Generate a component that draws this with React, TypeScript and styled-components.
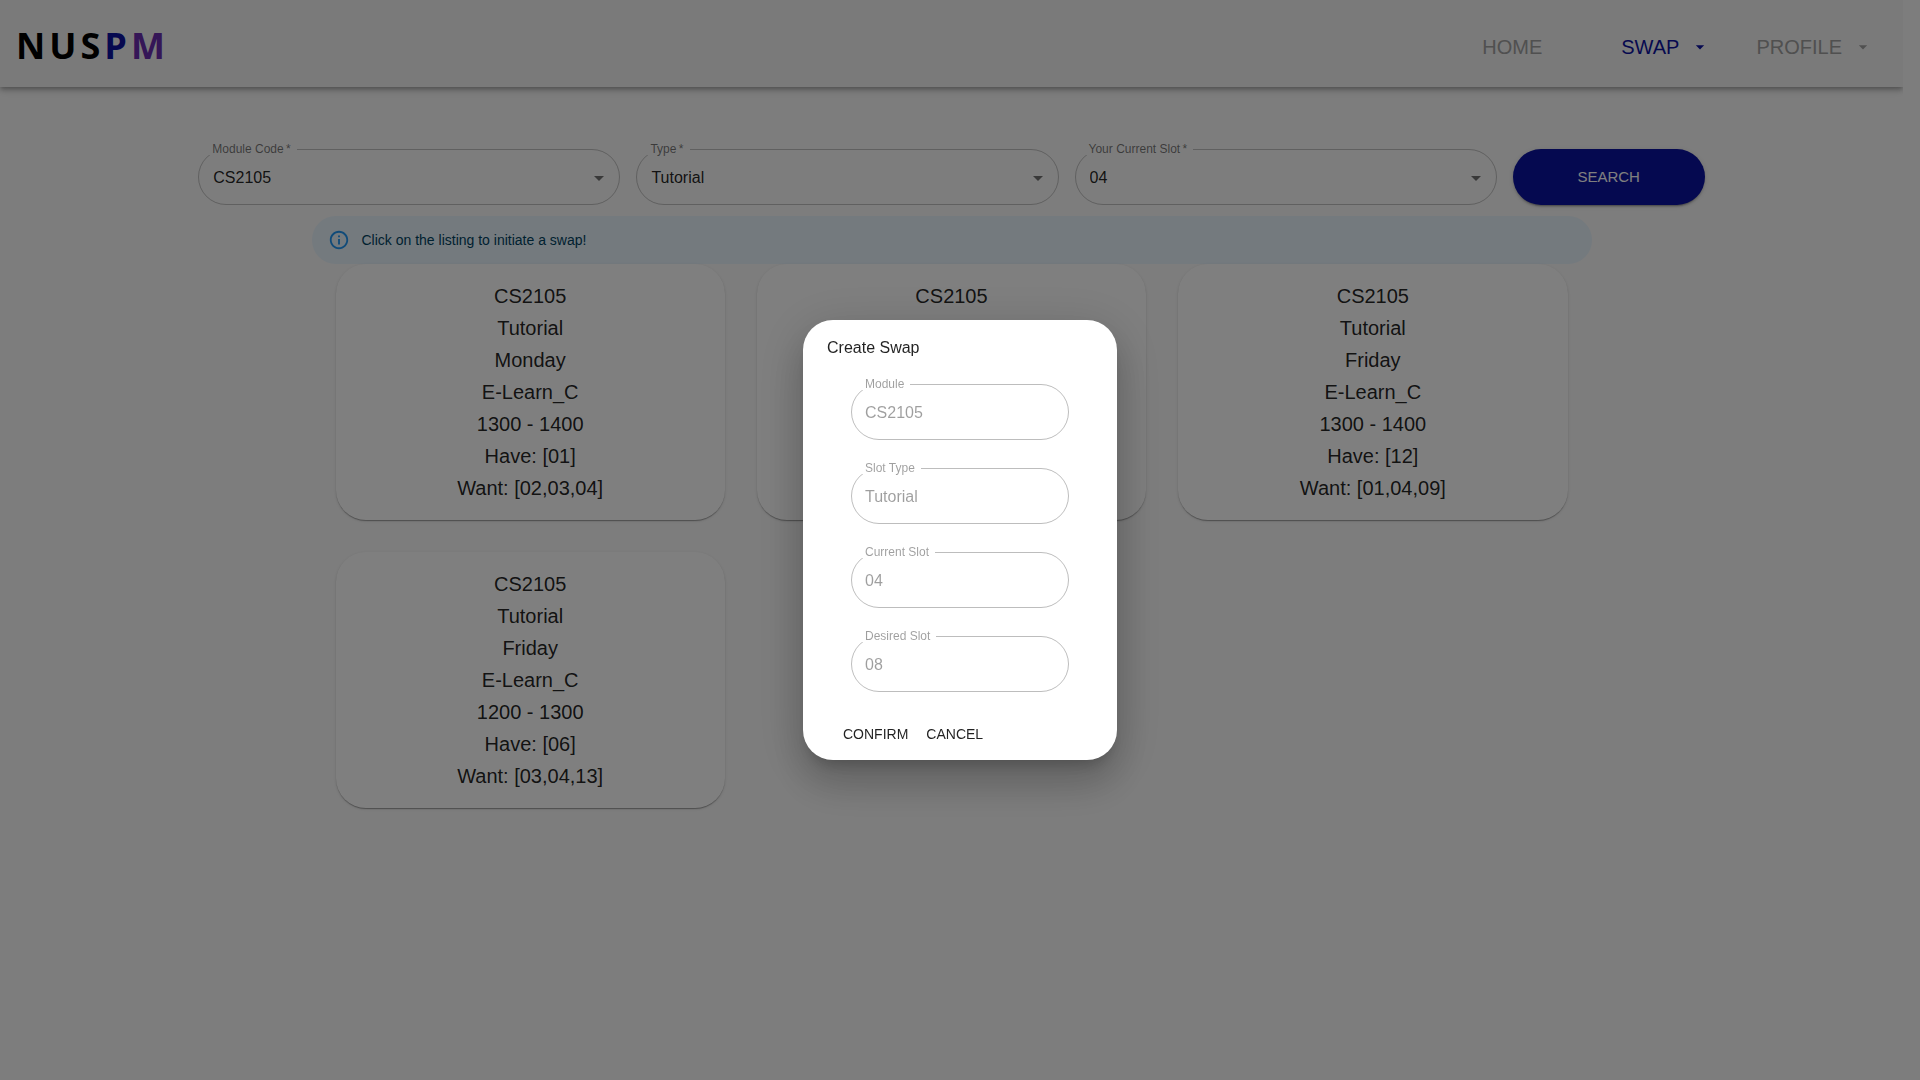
import React, { useId } from "react";
import styled, { createGlobalStyle } from "styled-components";

const GlobalStyle = createGlobalStyle`
  *, *::before, *::after { box-sizing: border-box; }
  html, body { margin: 0; }
  body {
    min-height: 100vh;
    background: #fafafa;
    color: rgba(0, 0, 0, 0.87);
    font-family: "Liberation Sans", Helvetica, Arial, sans-serif;
    font-size: 16px;
    line-height: 24px;
    overflow: hidden;
    padding-right: 17px;
  }
  button, input, select { font: inherit; color: inherit; }
`;

const Header = styled.header`
  display: flex;
  align-items: center;
  justify-content: space-between;
  height: 87px;
  padding: 4px 30px 0 16px;
  background: #f5f5f5;
  box-shadow: 0 2px 4px -1px rgba(0, 0, 0, 0.2), 0 4px 5px rgba(0, 0, 0, 0.14),
    0 1px 10px rgba(0, 0, 0, 0.12);
  clip-path: inset(0 0 -20px 0);
`;

const Logo = styled.a`
  display: flex;
  gap: 4px;
  font-family: "Open Sans", "Noto Sans", sans-serif;
  font-size: 36px;
  font-weight: 700;
  line-height: 48px;
  color: #000;
  text-decoration: none;
`;

const LogoLetter = styled.span<{ $color?: string }>`
  color: ${(p) => p.$color ?? "#000"};
`;

const Nav = styled.nav`
  display: flex;
  align-items: center;
  gap: 46px;
  padding-top: 2px;
  font-size: 20px;
  line-height: 32px;
  color: #a0a0a0;
`;

const NavLink = styled.a`
  padding: 0 33px;
  color: inherit;
  text-decoration: none;
`;

const NavMenu = styled.button<{ $active?: boolean }>`
  display: flex;
  align-items: center;
  gap: 11px;
  padding: 0;
  border: 0;
  background: none;
  color: ${(p) => (p.$active ? "#0c12a0" : "inherit")};
  cursor: pointer;
`;

const Icon = styled.svg<{ $size: number }>`
  flex: none;
  width: ${(p) => p.$size}px;
  height: ${(p) => p.$size}px;
  fill: currentColor;
`;

const SearchForm = styled.form`
  display: flex;
  gap: 16px;
  width: 80%;
  margin: 57px auto 0;
  padding: 0 8px;
`;

const Outline = styled.fieldset<{ $disabled?: boolean }>`
  flex: 1;
  min-width: 0;
  margin: 0;
  padding: 0 8px 4px;
  border: 1px solid ${(p) => (p.$disabled ? "rgba(0, 0, 0, 0.26)" : "rgba(0, 0, 0, 0.23)")};
  border-radius: 30px;
  color: ${(p) => (p.$disabled ? "rgba(0, 0, 0, 0.38)" : "rgba(0, 0, 0, 0.87)")};
`;

const Legend = styled.legend<{ $disabled?: boolean }>`
  padding: 0 6px 0 5px;
  font-size: 12px;
  line-height: 11px;
  color: ${(p) => (p.$disabled ? "rgba(0, 0, 0, 0.38)" : "rgba(0, 0, 0, 0.54)")};

  label { display: block; }
`;

const SelectBox = styled.div`
  display: grid;
  align-items: center;

  > * { grid-area: 1 / 1; }
  > svg {
    justify-self: end;
    color: rgba(0, 0, 0, 0.54);
    pointer-events: none;
  }
`;

const Select = styled.select`
  appearance: none;
  width: 100%;
  height: 45px;
  padding: 0 32px 0 6px;
  border: 0;
  outline: 0;
  background: none;
`;

const Input = styled.input`
  display: block;
  width: 100%;
  height: 45px;
  padding: 0 5px;
  border: 0;
  outline: 0;
  background: none;
`;

const SearchButton = styled.button`
  width: 192px;
  height: 56px;
  margin-top: 5px;
  border: 0;
  border-radius: 30px;
  background: #0a12a0;
  color: #fff;
  font-size: 15px;
  cursor: pointer;
  box-shadow: 0 3px 1px -2px rgba(0, 0, 0, 0.2), 0 2px 2px rgba(0, 0, 0, 0.14),
    0 1px 5px rgba(0, 0, 0, 0.12);
`;

const Results = styled.main`
  max-width: 1280px;
  margin: 11px auto 0;
`;

const Notice = styled.div`
  display: flex;
  align-items: center;
  gap: 12px;
  height: 48px;
  padding: 0 16px;
  border-radius: 30px;
  background: #e8f4fd;
  color: #014361;
  font-size: 14px;

  svg { color: #2196f3; }
`;

const CardGrid = styled.div`
  display: grid;
  grid-template-columns: repeat(3, 1fr);
  gap: 32px;
  padding: 0 24px 32px;
`;

const Card = styled.button`
  display: block;
  padding: 16px;
  border: 0;
  border-radius: 30px;
  background: #fff;
  font-size: 20px;
  line-height: 32px;
  text-align: center;
  cursor: pointer;
  box-shadow: 0 2px 1px -1px rgba(0, 0, 0, 0.2), 0 1px 1px rgba(0, 0, 0, 0.14),
    0 1px 3px rgba(0, 0, 0, 0.12);
`;

const CardLine = styled.span`
  display: block;
`;

const Backdrop = styled.div`
  position: fixed;
  inset: 0;
  display: flex;
  align-items: center;
  justify-content: center;
  background: rgba(0, 0, 0, 0.5);
`;

const Dialog = styled.section`
  width: 314px;
  border-radius: 30px;
  background: #fff;
  box-shadow: 0 11px 15px -7px rgba(0, 0, 0, 0.2), 0 24px 38px 3px rgba(0, 0, 0, 0.14),
    0 9px 46px 8px rgba(0, 0, 0, 0.12);
`;

const DialogTitle = styled.h2`
  margin: 0;
  padding: 16px 24px 14px;
  font-size: 16px;
  font-weight: 400;
  line-height: 24px;
`;

const DialogFields = styled.div`
  display: flex;
  flex-direction: column;
  gap: 23px;
  padding: 5px 48px 24px;
`;

const DialogActions = styled.div`
  display: flex;
  gap: 2px;
  padding: 0 32px 8px;
`;

const TextButton = styled.button`
  height: 36px;
  padding: 0 8px;
  border: 0;
  border-radius: 30px;
  background: none;
  font-size: 14px;
  cursor: pointer;
`;

const CaretIcon = ({ size }: { size: number }) => (
  <Icon $size={size} viewBox="0 0 24 24" aria-hidden="true">
    <path d="M7 10l5 5 5-5z" />
  </Icon>
);

const InfoIcon = () => (
  <Icon $size={22} viewBox="0 0 24 24" aria-hidden="true">
    <path d="M11 7h2v2h-2zm0 4h2v6h-2zm1-9C6.48 2 2 6.48 2 12s4.48 10 10 10 10-4.48 10-10S17.52 2 12 2zm0 18c-4.41 0-8-3.59-8-8s3.59-8 8-8 8 3.59 8 8-3.59 8-8 8z" />
  </Icon>
);

function SelectField({ label, value }: { label: string; value: string }) {
  const id = useId();
  return (
    <Outline>
      <Legend>
        <label htmlFor={id}>{label}{"\u2009*"}</label>
      </Legend>
      <SelectBox>
        <Select id={id} defaultValue={value} required>
          <option value={value}>{value}</option>
        </Select>
        <CaretIcon size={24} />
      </SelectBox>
    </Outline>
  );
}

function LockedField({ label, value }: { label: string; value: string }) {
  const id = useId();
  return (
    <Outline $disabled>
      <Legend $disabled>
        <label htmlFor={id}>{label}</label>
      </Legend>
      <Input id={id} value={value} disabled readOnly />
    </Outline>
  );
}

const listings = [
  { day: "Monday", time: "1300 - 1400", have: "01", want: "02,03,04" },
  { day: "Thursday", time: "1200 - 1300", have: "08", want: "04" },
  { day: "Friday", time: "1300 - 1400", have: "12", want: "01,04,09" },
  { day: "Friday", time: "1200 - 1300", have: "06", want: "03,04,13" },
];

const searchFields = [
  { label: "Module Code", value: "CS2105" },
  { label: "Type", value: "Tutorial" },
  { label: "Your Current Slot", value: "04" },
];

const swapFields = [
  { label: "Module", value: "CS2105" },
  { label: "Slot Type", value: "Tutorial" },
  { label: "Current Slot", value: "04" },
  { label: "Desired Slot", value: "08" },
];

export default function App() {
  return (
    <>
      <GlobalStyle />
      <Header>
        <Logo href="#" aria-label="NUSPM">
          <LogoLetter>N</LogoLetter>
          <LogoLetter>U</LogoLetter>
          <LogoLetter>S</LogoLetter>
          <LogoLetter $color="#0c12a0">P</LogoLetter>
          <LogoLetter $color="#6a2cae">M</LogoLetter>
        </Logo>
        <Nav>
          <NavLink href="#">HOME</NavLink>
          <NavMenu type="button" $active>
            SWAP
            <CaretIcon size={20} />
          </NavMenu>
          <NavMenu type="button">
            PROFILE
            <CaretIcon size={20} />
          </NavMenu>
        </Nav>
      </Header>

      <SearchForm onSubmit={(e) => e.preventDefault()}>
        {searchFields.map((f) => (
          <SelectField key={f.label} {...f} />
        ))}
        <SearchButton type="submit">SEARCH</SearchButton>
      </SearchForm>

      <Results>
        <Notice role="status">
          <InfoIcon />
          Click on the listing to initiate a swap!
        </Notice>
        <CardGrid>
          {listings.map((l) => (
            <Card key={l.have} type="button">
              <CardLine>CS2105</CardLine>
              <CardLine>Tutorial</CardLine>
              <CardLine>{l.day}</CardLine>
              <CardLine>E-Learn_C</CardLine>
              <CardLine>{l.time}</CardLine>
              <CardLine>Have: [{l.have}]</CardLine>
              <CardLine>Want: [{l.want}]</CardLine>
            </Card>
          ))}
        </CardGrid>
      </Results>

      <Backdrop>
        <Dialog role="dialog" aria-modal="true" aria-labelledby="swap-title">
          <DialogTitle id="swap-title">Create Swap</DialogTitle>
          <DialogFields>
            {swapFields.map((f) => (
              <LockedField key={f.label} {...f} />
            ))}
          </DialogFields>
          <DialogActions>
            <TextButton type="button">CONFIRM</TextButton>
            <TextButton type="button">CANCEL</TextButton>
          </DialogActions>
        </Dialog>
      </Backdrop>
    </>
  );
}
